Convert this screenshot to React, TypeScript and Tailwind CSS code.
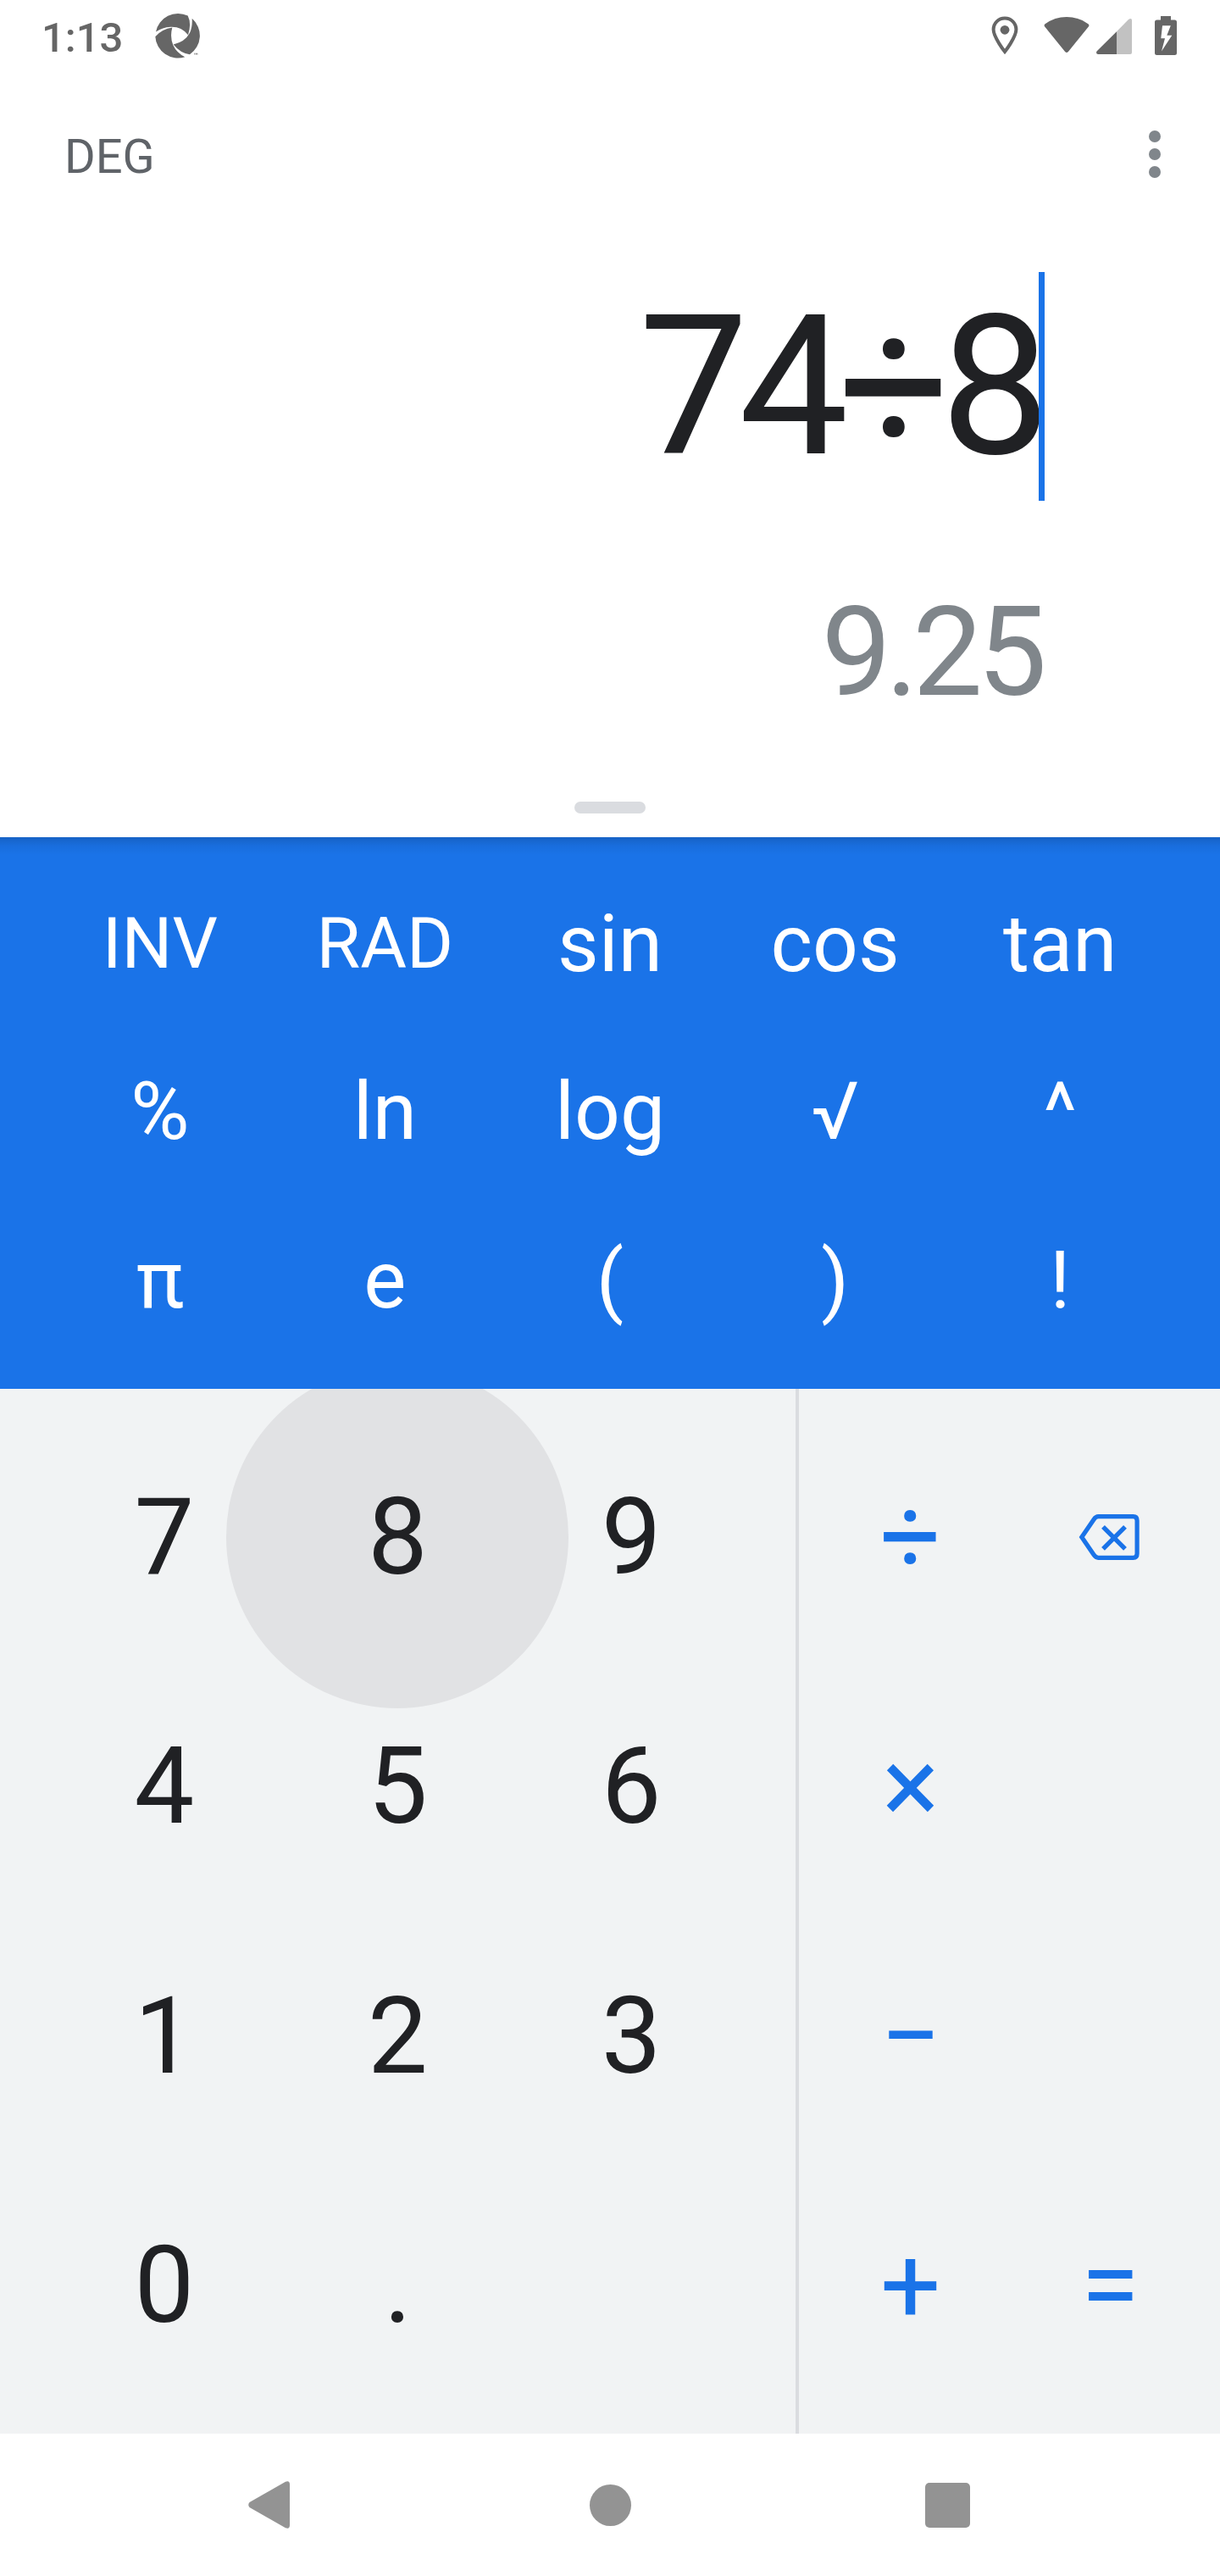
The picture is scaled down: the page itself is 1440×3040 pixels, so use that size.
import React from "react";

const scientificKeys = [
  "INV", "RAD", "sin", "cos", "tan",
  "%", "ln", "log", "√", "^",
  "π", "e", "(", ")", "!",
];

const digitKeys = ["7", "8", "9", "4", "5", "6", "1", "2", "3", "0", ".", ""];

const operatorKeys = ["÷", "delete", "×", "", "−", "", "+", "="];

function ApertureIcon() {
  return (
    <svg className="h-[54px] w-[54px]" viewBox="548 45.5 162 162" fill="#666666">
      <path d="M551 113 A80 80 0 0 1 664 56 Q678 84 665 124 Q641 94 603 96 Q574 98 551 113 Z" />
      <path d="M679 66 A80 80 0 0 1 671 193 Q639 190 613 158 Q654 149 671 117 Q681 96 679 66 Z" />
      <path d="M549 130 Q573 103 609 98 Q600 131 612 160 Q624 187 654 202 A80 80 0 0 1 549 130 Z" />
      <path opacity="0.8" d="M686 189 h5 v2 h-1.500 v3.500 h-2 v-3.500 h-1.500 Z M692 189 h7 v5.500 h-2 v-2.500 h-3 v2.500 h-2 Z" />
    </svg>
  );
}

function LocationIcon() {
  return (
    <svg className="h-[46px] w-[32px]" viewBox="0 0 32 46">
      <path
        d="M16 2.5 C8.6 2.5 2.6 8.4 2.6 15.8 C2.6 25 16 42 16 42 S29.4 25 29.4 15.8 C29.4 8.4 23.4 2.5 16 2.5 Z"
        fill="none"
        stroke="#666666"
        strokeWidth="4"
      />
      <circle cx="16" cy="16.3" r="5.4" fill="#666666" />
    </svg>
  );
}

function WifiIcon() {
  return (
    <svg className="h-[44px] w-[54px]" viewBox="0 0 54 44" fill="#666666">
      <path d="M1.2 12.5 Q-.2 10.6 1.6 9.3 Q12.8 1 27 1 Q41.2 1 52.4 9.3 Q54.2 10.6 52.8 12.5 L28.9 42 Q27 44 25.1 42 Z" />
    </svg>
  );
}

function SignalIcon() {
  return (
    <svg className="h-[42px] w-[42px]" viewBox="0 0 42 42">
      <path d="M24 15.2 L38 1 Q39.3 0 40.4 0 Q42 0 42 2 V40 Q42 42 40 42 H24 Z" fill="#c2c2c2" />
      <path d="M24 15.2 V42 H2.2 Q0 42 0 40 Q0 38.8 1 38 Z" fill="#666666" />
    </svg>
  );
}

function BatteryIcon() {
  return (
    <svg className="h-[46px] w-[26px]" viewBox="0 0 26 46">
      <path
        fillRule="evenodd"
        fill="#666666"
        d="M7 0 H19 V4.5 H23.5 Q26 4.500 26 7 V43.500 Q26 46 23.500 46 H2.500 Q0 46 0 43.500 V7 Q0 4.500 2.500 4.500 H7 Z M9 11.300 L7.300 26.300 H12 L8 41.500 L20.300 22.800 H14.300 L18.800 11.300 Z"
      />
    </svg>
  );
}

function BackspaceIcon() {
  return (
    <svg className="h-[56px] w-[74px]" viewBox="0 0 74 56" fill="none" stroke="#1a73e8">
      <path
        strokeWidth="5.2"
        d="M3.800 28 L18 7.200 Q20.400 3.700 23.400 3.700 H64.500 Q69.100 3.700 69.100 8.500 V47.500 Q69.100 52.300 64.500 52.300 H23.400 Q20.400 52.300 18 48.800 Z"
      />
      <path strokeWidth="5.400" d="M29 15.900 L55 41.900 M55 15.900 L29 41.900" />
    </svg>
  );
}

function StatusBar() {
  return (
    <div className="flex h-[84px] items-center pl-[49px] pr-[51px]">
      <span className="pt-[4px] text-[49px] leading-[57px] font-medium text-[#666666]">1:13</span>
      <div className="ml-[37.5px]">
        <ApertureIcon />
      </div>
      <div className="ml-auto flex items-center">
        <LocationIcon />
        <div className="ml-[30px] -mt-[2px]"><WifiIcon /></div>
        <div className="ml-[8px] mt-[2px]"><SignalIcon /></div>
        <div className="ml-[27px]"><BatteryIcon /></div>
      </div>
    </div>
  );
}

function Toolbar() {
  return (
    <div className="flex h-[196px] items-center justify-between pl-[76px] pr-[70px]">
      <span className="pt-[5px] text-[56px] leading-[66px] text-[#5f6368]">DEG</span>
      <button className="flex flex-col gap-[7px]" aria-label="More options">
        <span className="size-[14px] rounded-full bg-[#80868b]" />
        <span className="size-[14px] rounded-full bg-[#80868b]" />
        <span className="size-[14px] rounded-full bg-[#80868b]" />
      </button>
    </div>
  );
}

function Display() {
  return (
    <div className="flex h-[708px] flex-col items-end pt-[41px] pr-[207px]">
      <div className="flex h-[270px]">
        <span className="text-[230.4px] leading-[270px] tracking-[-0.05em] text-[#202124]">74÷8</span>
        <span className="-ml-[2px] h-[270px] w-[7px] bg-[#1a73e8]" />
      </div>
      <div className="mt-[93px] mr-[4px] h-[172px] text-[147px] leading-[172px] tracking-[-0.046em] text-[#80868b]">
        9.25
      </div>
      <div className="mt-[90px] mr-[-207px] flex w-[1440px] justify-center">
        <div className="h-[14px] w-[84px] rounded-full bg-[#dadce0]" />
      </div>
    </div>
  );
}

function ScientificPad() {
  return (
    <div className="h-[651px] bg-[#1a73e8]">
      <div className="h-[651px] bg-[linear-gradient(to_bottom,rgba(0,0,0,0.15)_0px,rgba(0,0,0,0.05)_10px,transparent_21px)] px-[56px] pt-[27px] pb-[29px]">
        <div className="grid h-full grid-cols-5 grid-rows-3 text-white">
          {scientificKeys.map((label) => (
            <button
              key={label}
              className={
                label === "INV" || label === "RAD"
                  ? "flex items-center justify-center text-[84px] leading-[98px]"
                  : "flex items-center justify-center text-[94.5px] leading-[112px]"
              }
            >
              {label}
            </button>
          ))}
        </div>
      </div>
    </div>
  );
}

function NumberPad() {
  return (
    <div className="flex h-[1233px] overflow-hidden bg-[#f1f3f4]">
      <div className="grid w-[939px] grid-cols-3 grid-rows-4 px-[56px] py-[28px] text-[#202124]">
        {digitKeys.map((label, i) => (
          <div key={i} className="relative flex items-center justify-center text-[126px] leading-[148px]">
            {label === "8" && (
              <span className="absolute top-1/2 left-1/2 size-[404px] -translate-x-1/2 -translate-y-1/2 rounded-full bg-[#e1e2e4]" />
            )}
            <span className="relative">{label}</span>
          </div>
        ))}
      </div>
      <div className="w-[4px] bg-[#dadce0]" />
      <div className="grid flex-1 grid-cols-2 grid-rows-4 py-[28px] pr-[12px] pl-[14px] text-[#1a73e8]">
        {operatorKeys.map((label, i) => (
          <div key={i} className="flex items-center justify-center text-[126px] leading-[148px]">
            {label === "delete" ? <BackspaceIcon /> : label}
          </div>
        ))}
      </div>
    </div>
  );
}

function NavigationBar() {
  return (
    <div className="flex h-[168px] items-center bg-white pl-[293px]">
      <svg className="h-[56px] w-[50px]" viewBox="0 0 50 56" fill="#939393">
        <path d="M1.500 25 L44 .8 Q49 -1 49 4 V52 Q49 57 44 55.200 L1.500 31 Q-1 28 1.500 25 Z" />
      </svg>
      <span className="ml-[353px] size-[49px] rounded-full bg-[#939393]" />
      <span className="ml-[347px] size-[53px] rounded-[5px] bg-[#939393]" />
    </div>
  );
}

export default function App() {
  return (
    <main className="h-[3040px] w-[1440px] overflow-hidden bg-white font-['Roboto',sans-serif]">
      <StatusBar />
      <Toolbar />
      <Display />
      <ScientificPad />
      <NumberPad />
      <NavigationBar />
    </main>
  );
}
